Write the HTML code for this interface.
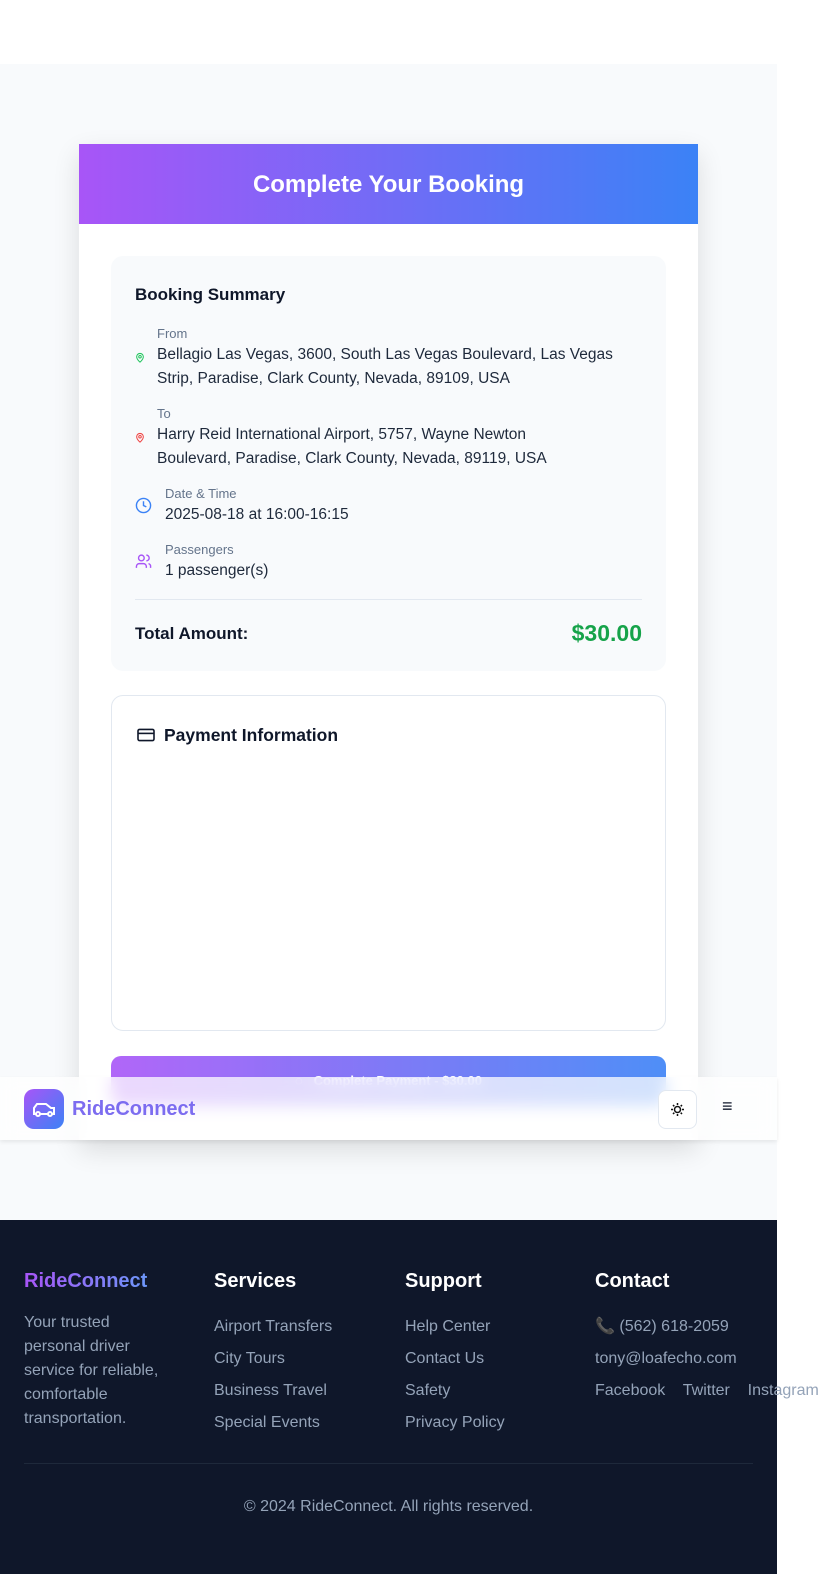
<!DOCTYPE html>
<html><head><meta charset="utf-8"><style>
*{box-sizing:border-box;margin:0;padding:0}
body{width:831px;height:1574px;background:#fff;font-family:"Liberation Sans",sans-serif;position:relative;overflow:hidden;color:#0f172a}
.main{position:absolute;left:0;top:64px;width:777px;height:1156px;background:#f8fafc}
.card{position:absolute;left:79px;top:144px;width:619px;height:996px;background:#fff;box-shadow:0 10px 25px rgba(0,0,0,.12)}
.hd{height:80px;background:linear-gradient(90deg,#a855f7,#3b82f6);color:#fff;font-weight:bold;font-size:24px;text-align:center;line-height:82px}
.sum{position:absolute;left:32px;top:112px;width:555px;height:415px;background:#f8fafc;border-radius:12px;padding:29px 24px}
.sum h3{font-size:17px;margin-bottom:20px}
.row{position:relative;padding-left:22px;margin-bottom:14px}
.row.w{padding-left:30px}
.lab{font-size:13px;color:#64748b;line-height:18px}
.val{font-size:15.5px;color:#1e293b;line-height:24px;max-width:480px}
.ic{position:absolute;left:0}
.tot{position:absolute;left:24px;right:24px;top:343px;border-top:1px solid #e2e8f0;padding-top:20px;display:flex;justify-content:space-between;align-items:center}
.tot b{font-size:17px}.tot span{font-size:23px;font-weight:bold;color:#16a34a}
.pay{position:absolute;left:32px;top:551px;width:555px;height:336px;border:1px solid #e2e8f0;border-radius:12px;padding:29px 24px;font-weight:bold;font-size:17.5px}
.btn{position:absolute;left:32px;top:912px;width:555px;height:50px;border-radius:10px;background:linear-gradient(90deg,#a855f7,#3b82f6);color:#fff;font-size:13px;font-weight:bold;text-align:center;line-height:50px;opacity:.9}
.nav{position:absolute;left:0;top:1077px;width:777px;height:63px;background:rgba(255,255,255,.75);backdrop-filter:blur(8px);box-shadow:0 2px 4px rgba(0,0,0,.08)}
.logo{position:absolute;left:24px;top:12px;width:40px;height:40px;border-radius:10px;background:linear-gradient(135deg,#a855f7,#3b82f6)}
.brand{position:absolute;left:72px;top:21px;font-size:20px;font-weight:bold;color:#7c6cf0}
.sun{position:absolute;left:658px;top:13px;width:39px;height:39px;border:1px solid #e2e8f0;border-radius:8px;background:#fff}
.menu{position:absolute;left:722px;top:19px;font-size:18px}
.foot{position:absolute;left:0;top:1220px;width:777px;height:354px;background:#0f172a;color:#94a3b8;font-size:16px}
.col{position:absolute;top:50px}
.col h4{color:#fff;font-size:20px;margin-bottom:18px}
.col p{line-height:32px}
.copy{position:absolute;left:24px;right:24px;top:243px;border-top:1px solid #1e293b;text-align:center;padding-top:34px}
</style></head><body>
<div class="main"></div>
<div class="card">
<div class="hd">Complete Your Booking</div>
<div class="sum">
<h3>Booking Summary</h3>
<div class="row"><svg class="ic" style="top:27px" width="10" height="12" viewBox="0 0 24 24" fill="none" stroke="#22c55e" stroke-width="2.5"><path d="M12 22s8-7 8-13a8 8 0 0 0-16 0c0 6 8 13 8 13z"/><circle cx="12" cy="9" r="3"/></svg><div class="lab">From</div><div class="val">Bellagio Las Vegas, 3600, South Las Vegas Boulevard, Las Vegas Strip, Paradise, Clark County, Nevada, 89109, USA</div></div>
<div class="row"><svg class="ic" style="top:27px" width="10" height="12" viewBox="0 0 24 24" fill="none" stroke="#ef4444" stroke-width="2.5"><path d="M12 22s8-7 8-13a8 8 0 0 0-16 0c0 6 8 13 8 13z"/><circle cx="12" cy="9" r="3"/></svg><div class="lab">To</div><div class="val" style="max-width:420px">Harry Reid International Airport, 5757, Wayne Newton Boulevard, Paradise, Clark County, Nevada, 89119, USA</div></div>
<div class="row w"><svg class="ic" style="top:12px" width="17" height="17" viewBox="0 0 24 24" fill="none" stroke="#3b82f6" stroke-width="2"><circle cx="12" cy="12" r="10"/><path d="M12 6v6l4 2"/></svg><div class="lab">Date &amp; Time</div><div class="val">2025-08-18 at 16:00-16:15</div></div>
<div class="row w"><svg class="ic" style="top:12px" width="17" height="17" viewBox="0 0 24 24" fill="none" stroke="#a855f7" stroke-width="2"><circle cx="9" cy="7" r="4"/><path d="M2 21v-2a4 4 0 0 1 4-4h6a4 4 0 0 1 4 4v2M16 3a4 4 0 0 1 0 8M22 21v-2a4 4 0 0 0-3-4"/></svg><div class="lab">Passengers</div><div class="val">1 passenger(s)</div></div>
<div class="tot"><b>Total Amount:</b><span>$30.00</span></div>
</div>
<div class="pay"><svg style="vertical-align:-2px;margin-right:8px" width="20" height="16" viewBox="0 0 24 20" fill="none" stroke="#0f172a" stroke-width="2"><rect x="2" y="3" width="20" height="14" rx="2"/><path d="M2 8h20"/></svg>Payment Information</div>
<div class="btn">◌ &nbsp; Complete Payment - $30.00</div>
</div>
<div class="nav">
<div class="logo"><svg width="40" height="40" viewBox="0 0 40 40" fill="none" stroke="#fff" stroke-width="2"><path d="M10 25v-6l3-4h9l5 4h3v6z"/><circle cx="14" cy="25" r="2" fill="#8b5cf6"/><circle cx="26" cy="25" r="2" fill="#6b7cf6"/></svg></div>
<div class="brand">RideConnect</div>
<div class="sun"><svg width="37" height="37" viewBox="0 0 37 37" fill="none" stroke="#111" stroke-width="1.5"><circle cx="18.5" cy="18.5" r="3"/><path d="M18.5 12v2M18.5 23v2M12 18.5h2M23 18.5h2M14 14l1.3 1.3M21.7 21.7L23 23M14 23l1.3-1.3M21.7 15.3L23 14"/></svg></div>
<div class="menu">≡</div>
</div>
<div class="foot">
<div class="col" style="left:24px;width:150px"><h4 style="background:linear-gradient(90deg,#a855f7,#60a5fa);-webkit-background-clip:text;color:transparent">RideConnect</h4><p style="line-height:24px">Your trusted personal driver service for reliable, comfortable transportation.</p></div>
<div class="col" style="left:214px"><h4>Services</h4><p>Airport Transfers</p><p>City Tours</p><p>Business Travel</p><p>Special Events</p></div>
<div class="col" style="left:405px"><h4>Support</h4><p>Help Center</p><p>Contact Us</p><p>Safety</p><p>Privacy Policy</p></div>
<div class="col" style="left:595px;white-space:nowrap"><h4>Contact</h4><p>📞 (562) 618-2059</p><p>tony@loafecho.com</p><p>Facebook &nbsp;&nbsp; Twitter &nbsp;&nbsp; Instagram</p></div>
<div class="copy">© 2024 RideConnect. All rights reserved.</div>
</div>
</body></html>
